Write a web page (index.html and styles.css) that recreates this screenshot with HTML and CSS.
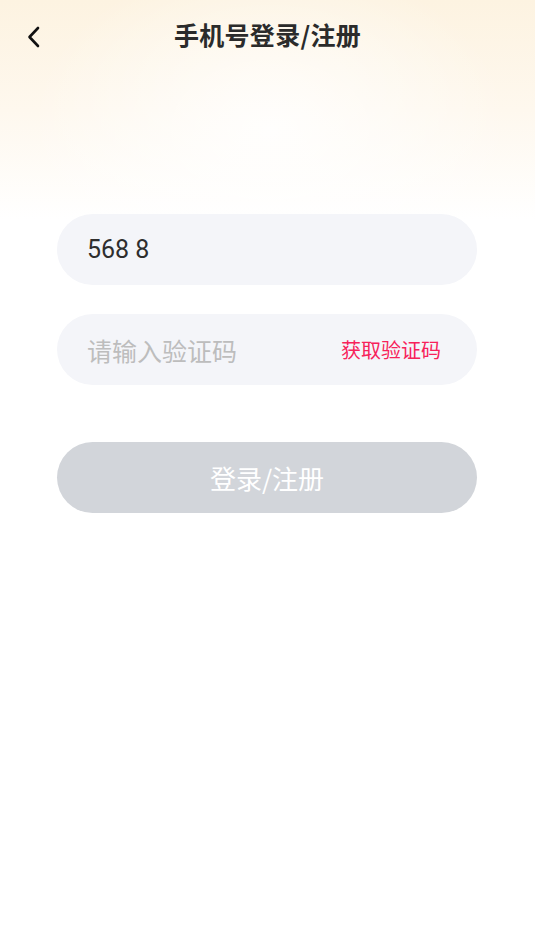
FILE: index.html
```html
<!DOCTYPE html>
<html lang="zh-CN">
<head>
    <meta charset="UTF-8">
    <meta name="viewport" content="width=device-width, initial-scale=1.0">
    <title>手机号登录/注册</title>
    <link rel="stylesheet" href="styles.css">
</head>
<body>
    <div class="page">
        <div class="nav">
            <span class="back">
                <svg width="16" height="24" viewBox="0 0 16 24">
                    <path d="M12 3 L3.5 12 L12 21" fill="none" stroke="#111" stroke-width="2.6" stroke-linecap="round" stroke-linejoin="round"/>
                </svg>
            </span>
            <h1 class="title">手机号登录/注册</h1>
        </div>

        <div class="form">
            <div class="field">
                <span class="value">568 8</span>
            </div>
            <div class="field">
                <span class="placeholder">请输入验证码</span>
                <span class="get-code">获取验证码</span>
            </div>
            <button class="btn-submit">登录/注册</button>
        </div>
    </div>
</body>
</html>
```

FILE: styles.css
```css
* {
    margin: 0;
    padding: 0;
    box-sizing: border-box;
}

body {
    width: 535px;
    height: 951px;
    background: #fff;
    font-family: 'Noto Sans CJK SC', 'Noto Sans', sans-serif;
}

.page {
    height: 100%;
    background:
        radial-gradient(ellipse 240px 170px at 270px 130px, rgba(255, 255, 255, 0.85), rgba(255, 255, 255, 0)),
        linear-gradient(180deg, #fdf3e1 0px, #fef8ee 110px, #ffffff 220px);
}

.nav {
    height: 74px;
    display: flex;
    align-items: center;
    justify-content: center;
    position: relative;
}

.back {
    position: absolute;
    left: 26px;
    top: 25px;
    display: flex;
}

.title {
    font-size: 25px;
    font-weight: bold;
    color: #2b2b2b;
    letter-spacing: 0.3px;
    margin-top: -7px;
}

.form {
    padding: 140px 58px 0 57px;
    display: flex;
    flex-direction: column;
}

.field {
    height: 71px;
    border-radius: 36px;
    background: #f4f5f9;
    display: flex;
    align-items: center;
    justify-content: space-between;
    padding: 0 36px 0 30px;
    margin-bottom: 29px;
}

.value {
    font-size: 25px;
    color: #2e2e2e;
    font-family: Roboto, 'Noto Sans CJK SC', sans-serif;
}

.placeholder {
    font-size: 25px;
    color: #bdbdbd;
}

.get-code {
    font-size: 20px;
    color: #f7225a;
}

.btn-submit {
    margin-top: 28px;
    height: 71px;
    border: none;
    border-radius: 36px;
    background: #d2d5da;
    color: #fff;
    font-size: 26px;
    font-family: 'Noto Sans CJK SC', sans-serif;
}
```
